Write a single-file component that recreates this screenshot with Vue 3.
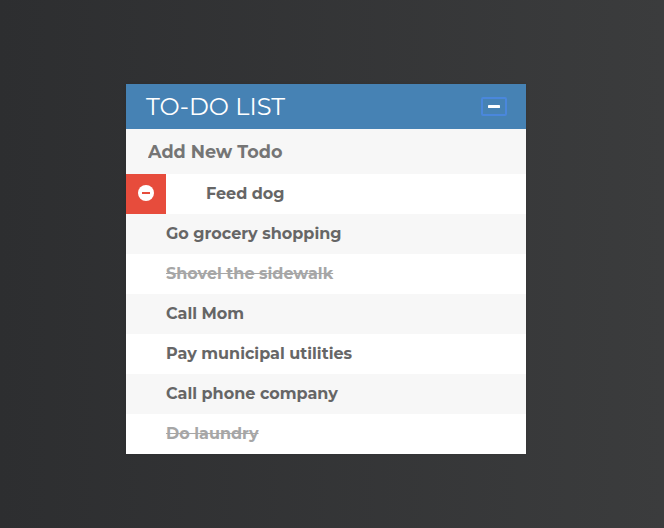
<script setup>
import { ref } from 'vue'

const newTodo = ref('')
const todos = ref([
  { text: 'Feed dog', done: false, active: true },
  { text: 'Go grocery shopping', done: false },
  { text: 'Shovel the sidewalk', done: true },
  { text: 'Call Mom', done: false },
  { text: 'Pay municipal utilities', done: false },
  { text: 'Call phone company', done: false },
  { text: 'Do laundry', done: true },
])
</script>

<template>
  <main class="page">
    <section class="card">
      <header class="header">
        <h1 class="title">To-Do List</h1>
        <button class="toggle" type="button">
          <svg width="12" height="3" viewBox="0 0 12 3"><rect width="12" height="3" rx="0.4" fill="#fff" /></svg>
        </button>
      </header>
      <input v-model="newTodo" class="entry" type="text" placeholder="Add New Todo" />
      <ul class="list">
        <li v-for="todo in todos" :key="todo.text" class="item" :class="{ done: todo.done, active: todo.active }">
          <span v-if="todo.active" class="remove">
            <svg width="16" height="16" viewBox="0 0 16 16">
              <circle cx="8" cy="8" r="8" fill="#fff" />
              <rect x="4" y="7" width="8" height="2" fill="#e74c3c" />
            </svg>
          </span>
          <span class="label">{{ todo.text }}</span>
        </li>
      </ul>
    </section>
  </main>
</template>

<style>
body {
  margin: 0;
}
</style>

<style scoped>
.page {
  box-sizing: border-box;
  height: 528px;
  padding: 84px 12px 0 0;
  background: linear-gradient(to right, #2d2e30, #3b3c3d);
  font-family: Montserrat, Inter, "Liberation Sans", sans-serif;
}
.card {
  width: 400px;
  margin: 0 auto;
  background: #f7f7f7;
  box-shadow: 0 0 3px rgba(0, 0, 0, 0.1);
}
.header {
  box-sizing: border-box;
  display: flex;
  align-items: center;
  justify-content: space-between;
  height: 45px;
  padding: 0 19px 0 20px;
  background: #4682b4;
  color: #fff;
}
.title {
  margin: 0;
  font-size: 24px;
  font-weight: 400;
  line-height: 45px;
  text-transform: uppercase;
}
.toggle {
  box-sizing: border-box;
  display: flex;
  align-items: center;
  justify-content: center;
  width: 26px;
  height: 19px;
  padding: 0;
  border: 2px solid #4a87dc;
  border-radius: 2px;
  background: transparent;
}
.entry {
  box-sizing: border-box;
  display: block;
  width: 100%;
  height: 45px;
  padding: 0 22px;
  border: 0;
  background: #f7f7f7;
  font: 700 17.6px Montserrat, Inter, "Liberation Sans", sans-serif;
}
.entry::placeholder {
  color: #757575;
  opacity: 1;
}
.list {
  margin: 0;
  padding: 0;
  list-style: none;
}
.item {
  display: flex;
  height: 40px;
  padding-left: 40px;
  background: #f7f7f7;
  color: #666;
  font-size: 16px;
  font-weight: 700;
  line-height: 39px;
}
.item:nth-child(odd) {
  background: #fff;
}
.item.active {
  padding-left: 0;
}
.remove {
  box-sizing: border-box;
  display: flex;
  align-items: center;
  justify-content: center;
  width: 40px;
  height: 40px;
  margin-right: 40px;
  padding-bottom: 2px;
  background: #e74c3c;
}
.done .label {
  color: #a6a6a6;
  text-decoration: line-through;
}
</style>
